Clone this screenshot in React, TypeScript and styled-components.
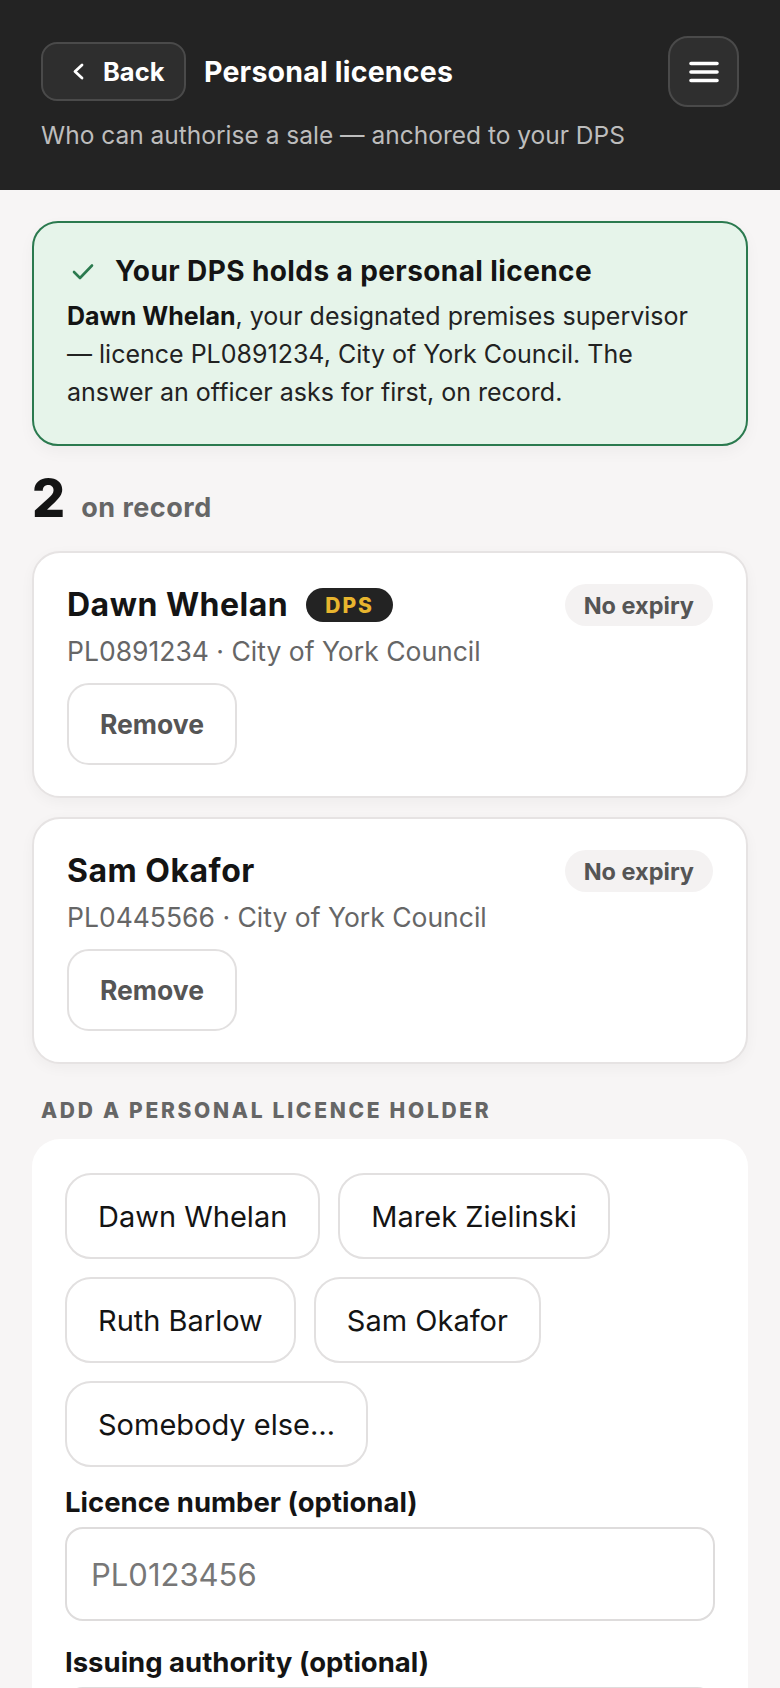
import React, { useState } from 'react';
import styled, { createGlobalStyle } from 'styled-components';

interface Licence {
  name: string,
  number: string,
  authority: string,
  isDps?: boolean,
}

const licences: Licence[] = [
  { name: 'Dawn Whelan', number: 'PL0891234', authority: 'City of York Council', isDps: true },
  { name: 'Sam Okafor', number: 'PL0445566', authority: 'City of York Council' },
];

const people = ['Dawn Whelan', 'Marek Zielinski', 'Ruth Barlow', 'Sam Okafor', 'Somebody else…'];

const App: React.FC = () => {
  const [picked, setPicked] = useState<string | null>(null);

  return (
    <>
      <GlobalStyle />
      <Header>
        <TopRow>
          <TitleGroup>
            <BackButton>
              <svg width="13" height="17" viewBox="0 0 13 17" fill="none">
                <path d="M10 2 L3 8.5 L10 15" stroke="#fff" strokeWidth="2.8" strokeLinecap="round" strokeLinejoin="round" />
              </svg>
              Back
            </BackButton>
            <Title>Personal licences</Title>
          </TitleGroup>
          <MenuButton aria-label="Menu">
            <svg width="30" height="22" viewBox="0 0 30 22" fill="none">
              <path d="M2 2.5h26M2 11h26M2 19.5h26" stroke="#fff" strokeWidth="3.6" strokeLinecap="round" />
            </svg>
          </MenuButton>
        </TopRow>
        <Subtitle>Who can authorise a sale — anchored to your DPS</Subtitle>
      </Header>

      <Main>
        <Banner>
          <BannerHeading>
            <svg width="22" height="17" viewBox="0 0 22 17" fill="none">
              <path d="M2 9 L8 15 L20 2.5" stroke="#2b7a4f" strokeWidth="2.6" strokeLinecap="round" strokeLinejoin="round" />
            </svg>
            Your DPS holds a personal licence
          </BannerHeading>
          <BannerText>
            <strong>Dawn Whelan</strong>, your designated premises supervisor — licence PL0891234, City of York Council. The answer an officer asks for first, on record.
          </BannerText>
        </Banner>

        <CountRow>
          <CountNumber>{licences.length}</CountNumber>
          <CountLabel>on record</CountLabel>
        </CountRow>

        <CardList>
          {licences.map((item) => (
            <Card key={item.number}>
              <CardTop>
                <NameGroup>
                  <Name>{item.name}</Name>
                  {item.isDps && <DpsBadge>DPS</DpsBadge>}
                </NameGroup>
                <ExpiryPill>No expiry</ExpiryPill>
              </CardTop>
              <Meta>{item.number} · {item.authority}</Meta>
              <RemoveButton>Remove</RemoveButton>
            </Card>
          ))}
        </CardList>

        <SectionLabel>Add a personal licence holder</SectionLabel>
        <AddCard>
          <Chips>
            {people.map((p) => (
              <Chip key={p} $active={picked === p} onClick={() => setPicked(p)}>{p}</Chip>
            ))}
          </Chips>
          <FieldLabel>Licence number (optional)</FieldLabel>
          <TextInput placeholder="PL0123456" />
          <FieldLabel $spaced>Issuing authority (optional)</FieldLabel>
          <TextInput placeholder="City of York Council" />
        </AddCard>
      </Main>
    </>
  );
};

const GlobalStyle = createGlobalStyle`
  * { box-sizing: border-box; }
  body {
    margin: 0;
    background: #f7f5f5;
    font-family: Inter, "Liberation Sans", sans-serif;
    color: #141414;
  }
`;

const Header = styled.header`
  background: #232323;
  padding: 36px 41px 39px;
`;

const TopRow = styled.div`
  display: flex;
  align-items: center;
  justify-content: space-between;
`;

const TitleGroup = styled.div`
  display: flex;
  align-items: center;
  gap: 18px;
`;

const BackButton = styled.button`
  display: flex;
  align-items: center;
  gap: 18px;
  height: 59px;
  width: 145px;
  padding: 0 0 0 29px;
  background: #2e2e2e;
  border: 2px solid #4a4a4a;
  border-radius: 16px;
  color: #fff;
  font-family: inherit;
  font-size: 25.5px;
  font-weight: 700;
  cursor: pointer;
`;

const Title = styled.h1`
  margin: 0;
  color: #fff;
  font-size: 28.5px;
  line-height: 36px;
  font-weight: 700;
  letter-spacing: 0.2px;
`;

const MenuButton = styled.button`
  width: 71px;
  height: 71px;
  display: flex;
  align-items: center;
  justify-content: center;
  background: #2f2f2f;
  border: 2px solid #4a4a4a;
  border-radius: 20px;
  cursor: pointer;
`;

const Subtitle = styled.p`
  margin: 12px 0 0;
  color: #bdbdbd;
  font-size: 24.5px;
  line-height: 32px;
`;

const Main = styled.main`
  padding: 31px 32px 40px;
`;

const Banner = styled.section`
  background: #e6f4ea;
  border: 2px solid #2b7a4f;
  border-radius: 26px;
  padding: 31px 33px 33px;
  box-shadow: 0 6px 16px rgba(0, 0, 0, 0.04);
`;

const BannerHeading = styled.h2`
  display: flex;
  align-items: center;
  gap: 21px;
  margin: 0;
  padding-left: 5px;
  font-size: 28px;
  line-height: 35px;
  font-weight: 700;
  letter-spacing: 0.4px;
  color: #141414;
`;

const BannerText = styled.p`
  margin: 8px 0 0;
  font-size: 25px;
  line-height: 38px;
  color: #222;

  strong { font-weight: 700; color: #141414; }
`;

const CountRow = styled.div`
  display: flex;
  align-items: baseline;
  gap: 16px;
  margin: 27px 0 26px;
`;

const CountNumber = styled.span`
  font-size: 52px;
  line-height: 1;
  font-weight: 800;
  color: #141414;
`;

const CountLabel = styled.span`
  font-size: 27px;
  font-weight: 700;
  letter-spacing: 0.5px;
  color: #666;
`;

const CardList = styled.div`
  display: flex;
  flex-direction: column;
  gap: 19px;
`;

const Card = styled.article`
  background: #fff;
  border: 2px solid #e6e3e3;
  border-radius: 28px;
  padding: 31px 33px 31px;
  box-shadow: 0 4px 14px rgba(0, 0, 0, 0.04);
`;

const CardTop = styled.div`
  display: flex;
  align-items: center;
  justify-content: space-between;
`;

const NameGroup = styled.div`
  display: flex;
  align-items: center;
  gap: 18px;
`;

const Name = styled.h3`
  margin: 0;
  font-size: 32px;
  line-height: 42px;
  font-weight: 700;
  color: #141414;
  letter-spacing: 0.5px;
`;

const DpsBadge = styled.span`
  display: inline-flex;
  align-items: center;
  height: 34px;
  padding: 0 19px;
  border-radius: 17px;
  background: #232323;
  color: #e8b52e;
  font-size: 21px;
  font-weight: 800;
  letter-spacing: 2px;
`;

const ExpiryPill = styled.span`
  display: inline-flex;
  align-items: center;
  height: 42px;
  padding: 0 19px;
  border-radius: 21px;
  background: #f4f2f2;
  color: #555;
  font-size: 23.5px;
  font-weight: 700;
`;

const Meta = styled.p`
  margin: 8px 0 0;
  font-size: 26.5px;
  line-height: 34px;
  color: #666;
`;

const RemoveButton = styled.button`
  display: block;
  margin-top: 15px;
  width: 170px;
  height: 82px;
  background: #fff;
  border: 2px solid #e2e0e0;
  border-radius: 22px;
  color: #555;
  font-family: inherit;
  font-size: 26.5px;
  font-weight: 700;
  cursor: pointer;
`;

const SectionLabel = styled.h4`
  margin: 33px 0 14px 9px;
  font-size: 21px;
  line-height: 28px;
  font-weight: 800;
  letter-spacing: 2.7px;
  text-transform: uppercase;
  color: #666;
`;

const AddCard = styled.section`
  background: #fff;
  border-radius: 28px;
  padding: 34px 33px 40px 33px;
`;

const Chips = styled.div`
  display: flex;
  flex-wrap: wrap;
  gap: 18px;
`;

const Chip = styled.button<{ $active?: boolean }>`
  height: 86px;
  padding: 0 31px;
  background: ${(p) => (p.$active ? '#232323' : '#fff')};
  color: ${(p) => (p.$active ? '#fff' : '#141414')};
  border: 2px solid #e2e0e0;
  border-radius: 26px;
  font-family: inherit;
  font-size: 29px;
  cursor: pointer;
`;

const FieldLabel = styled.label<{ $spaced?: boolean }>`
  display: block;
  margin: ${(p) => (p.$spaced ? '24px' : '18px')} 0 8px;
  font-size: 27.5px;
  line-height: 34px;
  font-weight: 700;
  color: #141414;
`;

const TextInput = styled.input`
  display: block;
  width: 100%;
  height: 94px;
  padding: 0 24px;
  border: 2px solid #dedcdc;
  border-radius: 18px;
  background: #fff;
  font-family: inherit;
  font-size: 31px;
  color: #141414;

  &::placeholder {
    color: #777;
  }
`;

export default App;
